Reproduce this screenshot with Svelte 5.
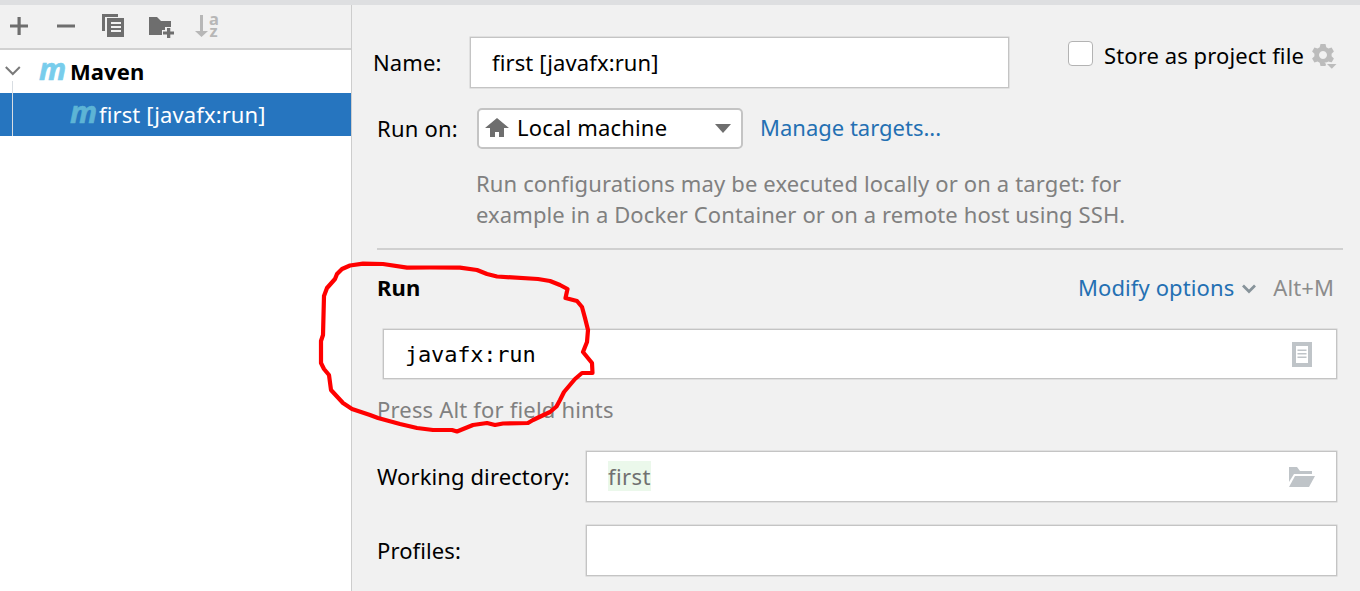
<script>
  const outline =
    'M350 265.5L342 269L337 274L335 279L327 288L324 296L323 335L321 341L321 363L324 369L329 375L331 390L343 403L352 409L370 415L378 418L400 424L417 428L433 430L452 430L457 431.5L473 425L487 423L495 425L503 423.5L528 423L533 420L550 412L556.5 406.5L560 400L564 392L575 379L582 373L592.5 373L592 363L583 352L587 342L588 330L585 318L582 307L577 301L565.5 298L567.5 289L560 285L550 281L538 279L497 276.5L487 274L477 270L460 267.7L430 267.5L407 267.7L383 264L363 263.7Z';
</script>

<div class="window">
  <aside>
    <div class="toolbar">
      <svg width="240" height="43" viewBox="0 5 240 43">
        <g fill="#6e6e6e">
          <path d="M17.5 17h3.2v7.4H28v3.2h-7.3V35h-3.2v-7.4H10v-3.2h7.5zM57 24.4h18v3.2H57z" />
          <path d="M102 14h16v3h-13v14h-3zM107 18h17v19h-17zM111 22v2h10v-2zm0 4v2h10v-2zm0 4v2h10v-2z" fill-rule="evenodd" />
          <path d="M149 17h8l4 4h10v6h-6v3h-3v5h-13z" />
          <path d="M167 28h3.3v3.4h3.7v3.2h-3.7V38H167v-3.4h-4v-3.2h4z" />
        </g>
        <g fill="#b7b7b7">
          <path d="M200 15h3v16h5l-6.5 6-6.5-6h5z" />
          <text x="209" y="24.5" class="az">a</text>
          <text x="209.5" y="36.8" class="az">z</text>
        </g>
      </svg>
    </div>
    <div class="node parent">
      <svg width="24" height="43"><path d="M5.8 17l7 7 7-7" fill="none" stroke="#7a7a7a" stroke-width="2" /></svg>
      <i class="m">m</i><b>Maven</b>
    </div>
    <div class="node child"><i class="m">m</i><span>first [javafx:run]</span></div>
  </aside>

  <main>
    <div class="row name">
      <label for="name">Name:</label>
      <div class="field" id="name">first [javafx:run]</div>
      <div class="store">
        <span class="check"></span><span class="text">Store as project file</span>
        <svg width="25" height="28" viewBox="0 0 25 28" fill="#bcbcbc">
          <path fill-rule="evenodd" d="M8.5 2h5l.8 3.2 2.1 1.2 3.2-1 2.3 4-2.3 2.3v2.5l2.3 2.4-2.3 4-3.2-1-2.1 1.2-.8 3.2h-5l-.8-3.2-2.1-1.2-3.2 1-2.3-4 2.3-2.4v-2.5L.1 9.4l2.3-4 3.2 1 2.1-1.2zM11 9a4 4 0 1 0 .01 0z" />
          <path d="M12.5 20.5h14l-7 7z" fill="#f1f1f1" /><path d="M15 22h9.5l-4.7 4.8z" />
        </svg>
      </div>
    </div>

    <div class="row target">
      <span class="label">Run on:</span>
      <div class="select">
        <svg width="24" height="20" viewBox="0 0 24 20" fill="#6e6e6e"><path d="M12 0l12 10h-5v9h-5v-5h-4v5H5v-9H0z" /></svg>
        <span>Local machine</span>
        <svg class="arrow" width="16" height="10"><path d="M0 0h16L8 9z" fill="#6e6e6e" /></svg>
      </div>
      <a href="#targets">Manage targets...</a>
    </div>
    <p class="help"><span>Run configurations may be executed locally or on a target: for</span><br />example in a Docker Container or on a remote host using SSH.</p>
    <hr />

    <div class="row run">
      <b>Run</b>
      <a href="#options">Modify options</a>
      <svg width="14" height="10"><path d="M1 1.5l6 6 6-6" fill="none" stroke="#87939a" stroke-width="2.7" /></svg>
      <span class="key">Alt+M</span>
    </div>
    <div class="field command">
      <span>javafx:run</span>
      <svg width="20" height="25" viewBox="0 0 20 25"><path fill="#bfc4c8" fill-rule="evenodd" d="M0 0h20v25H0zM4 4v17h12V4zM5.5 7.5h9v1.5h-9zM5.5 11h9v1.5h-9zM5.5 14.5h9v1.5h-9z" /></svg>
    </div>
    <div class="hint">Press Alt for field hints</div>

    <div class="row dir">
      <span class="label">Working directory:</span>
      <div class="field">
        <mark>first</mark>
        <svg width="28" height="20" viewBox="0 0 28 20" fill="#bfc4c8"><path d="M1 0h8l3 4h12v3H6L1 15z" /><path d="M7 9h20l-6 11H1z" /></svg>
      </div>
    </div>
    <div class="row profiles">
      <span class="label">Profiles:</span>
      <div class="field"></div>
    </div>
  </main>

  <svg class="mark" width="1360" height="591"><path d={outline} /></svg>
</div>

<style>
  :global(body) { margin: 0; overflow: hidden; }
  .window {
    position: relative;
    box-sizing: border-box;
    width: 1360px;
    height: 591px;
    display: flex;
    border-top: 5px solid #dedfe1;
    background: #f1f1f1;
    color: #000;
    font: 22px/30px "Noto Sans", sans-serif;
    letter-spacing: 0.1px;
    white-space: nowrap;
    overflow: hidden;
  }
  svg { display: block; flex: none; }
  aside { width: 351px; border-right: 1px solid #cdcdcd; background: #fff; flex: none; }
  .toolbar { height: 43px; border-bottom: 2px solid #d1d1d1; background: #f1f1f1; }
  .az { font: bold 16.5px "Noto Sans", sans-serif; }
  .node { height: 43px; display: flex; align-items: center; }
  .node b, .node span { margin-top: -2px; }
  .m { font: italic bold 30px/30px "Noto Sans", sans-serif; color: #78cdec; -webkit-text-stroke: 0.6px; }
  .parent .m { width: 31px; margin: -5px 0 0 15px; }
  .child { background: #2675bf; color: #fff; }
  .child::before { content: ""; width: 1px; height: 55px; margin: -12px 57px 0 12px; background: #d8dde2; }
  .child .m { width: 29px; margin-top: -5px; color: #5db4d5; }
  main { flex: 1; min-width: 0; padding: 32px 23px 0 25px; }
  .row { display: flex; align-items: center; }
  a { color: #2470b3; text-decoration: none; }
  .field {
    box-sizing: border-box;
    display: flex;
    align-items: center;
    justify-content: space-between;
    height: 51px;
    padding: 0 21px 2px;
    border: 1px solid #c4c4c4;
    background: #fff;
    box-shadow: 0 0 0 0.5px #d0d0d0;
  }
  .name { height: 51px; margin-left: -4px; }
  .name label { width: 97px; padding-bottom: 2px; }
  .name .field { width: 539px; flex: none; }
  .store { display: flex; align-items: center; margin: -16px 0 0 59px; }
  .store svg { margin-top: 2px; }
  .check { box-sizing: border-box; width: 25px; height: 25px; margin-top: -2px; border: 1.5px solid #b3b3b3; border-radius: 4px; background: #fff; }
  .store .text { width: 208px; margin-left: 11px; }
  .target { height: 40px; margin-top: 20px; }
  .target .label { width: 100px; letter-spacing: 0.2px; }
  .target a { margin-top: -2px; letter-spacing: 0; }
  .select { box-sizing: border-box; width: 266px; height: 41px; display: flex; align-items: center; padding: 0 10px 0 6px; border: 2px solid #c4c4c4; border-radius: 5px; background: #fff; margin-right: 17px; }
  .select span { margin: -2px 0 0 8px; letter-spacing: 0.18px; }
  .select .arrow { margin: 2px 0 0 auto; }
  .help { margin: 20px 0 0 99px; line-height: 31px; color: #808080; }
  .help span { letter-spacing: 0.14px; }
  hr { height: 2px; margin: 18px -6px 0 0; border: 0; background: #d0d0d0; }
  .run { height: 30px; margin-top: 22px; }
  .run a { margin-left: auto; }
  .run svg { margin: 4px 17px 0 8px; }
  .key { color: #8c8c8c; margin-right: 3px; }
  .command { height: 50px; margin: 27px 0 0 6px; font: 22px/30px "DejaVu Sans Mono", monospace; letter-spacing: -0.2px; padding: 0 24px 0 21px; }
  .command span { margin-top: 1px; }
  .hint { margin-top: 15px; color: #808080; letter-spacing: 0.18px; }
  .dir { margin-top: 27px; }
  .dir .field svg { margin: 2px -1px 0 0; }
  .profiles { margin-top: 23px; }
  .dir .label, .profiles .label { width: 209px; padding-bottom: 2px; box-sizing: border-box; }
  .dir .field, .profiles .field { flex: 1; }
  mark { background: #ebf8eb; color: #707070; letter-spacing: 0.4px; }
  .mark { position: absolute; left: 0; top: -5px; pointer-events: none; }
  .mark path { fill: none; stroke: #f00; stroke-width: 4.2; stroke-linejoin: round; }
</style>
